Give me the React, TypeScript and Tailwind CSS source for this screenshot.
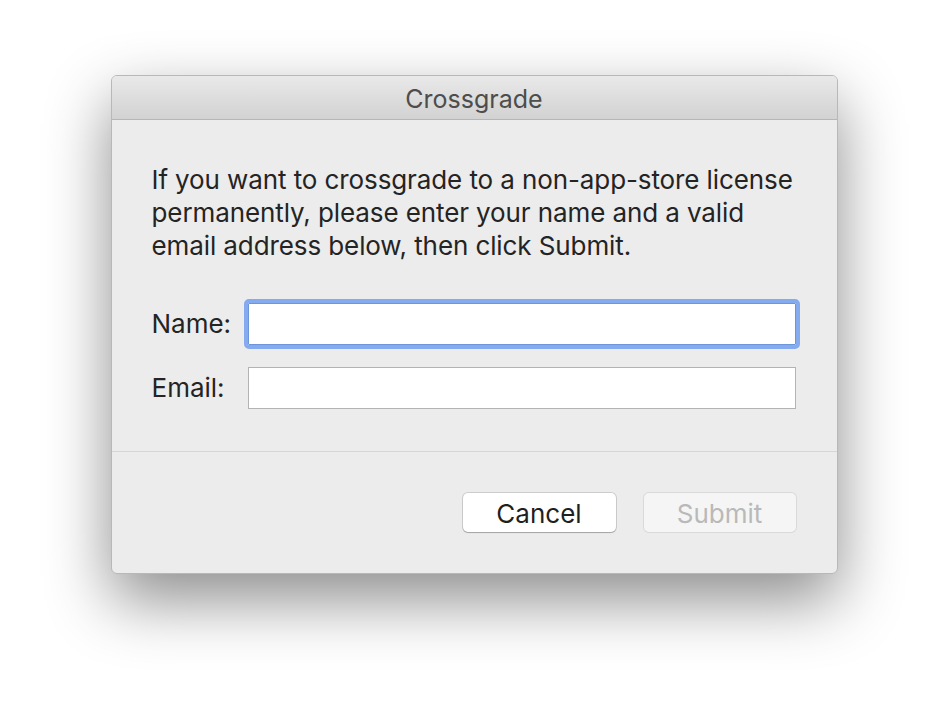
import React from "react";

export default function App() {
  return (
    <div
      className="w-[948px] h-[722px] bg-white flex justify-center pt-[75px]"
      style={{ fontFamily: 'Inter, "Noto Sans", sans-serif' }}
    >
      <div className="w-[727px] h-[499px] rounded-[6px] bg-[#ececec] border border-[#b8b8b8] shadow-[0_26px_64px_rgba(0,0,0,0.45)] flex flex-col overflow-hidden">
        <div className="h-[44px] shrink-0 bg-gradient-to-b from-[#e9e9e9] to-[#d2d2d2] border-b border-[#b6b6b6] flex items-center justify-center pt-[3px]">
          <span className="text-[25px] text-[#4d4d4d] leading-none">Crossgrade</span>
        </div>
        <div className="flex flex-col pl-[40px] pr-[39px] pt-[43px]">
          <p className="text-[26px] leading-[33px] text-[#242424] tracking-[-0.1px]">
            If you want to crossgrade to a non-app-store license
            <br />
            permanently, please enter your name and a valid
            <br />
            email address below, then click Submit.
          </p>
          <div className="mt-[41px] flex flex-col gap-[22px]">
            <div className="flex items-center">
              <label className="w-[96px] text-[26px] leading-none text-[#242424]">Name:</label>
              <div className="w-[548px] h-[42px] bg-white border border-[#6d95d9] outline outline-4 outline-[#84abef] rounded-[1px]" />
            </div>
            <div className="flex items-center">
              <label className="w-[96px] text-[26px] leading-none text-[#242424]">Email:</label>
              <div className="w-[548px] h-[42px] bg-white border border-[#b3b3b3]" />
            </div>
          </div>
        </div>
        <div className="mt-[42px] border-t border-[#d6d6d6]" />
        <div className="flex justify-end gap-[28px] pr-[41px] pt-[41px]">
          <button className="w-[153px] h-[39px] rounded-[5px] bg-white text-[26px] leading-none text-[#1f1f1f] pt-[2px] shadow-[0_0_0_1px_rgba(0,0,0,0.13),0_1px_1px_rgba(0,0,0,0.2)]">
            Cancel
          </button>
          <button className="w-[152px] h-[39px] rounded-[5px] bg-[#f5f5f5] text-[26px] leading-none text-[#b9b9b9] pt-[2px] shadow-[0_0_0_1px_rgba(0,0,0,0.08)]">
            Submit
          </button>
        </div>
      </div>
    </div>
  );
}
